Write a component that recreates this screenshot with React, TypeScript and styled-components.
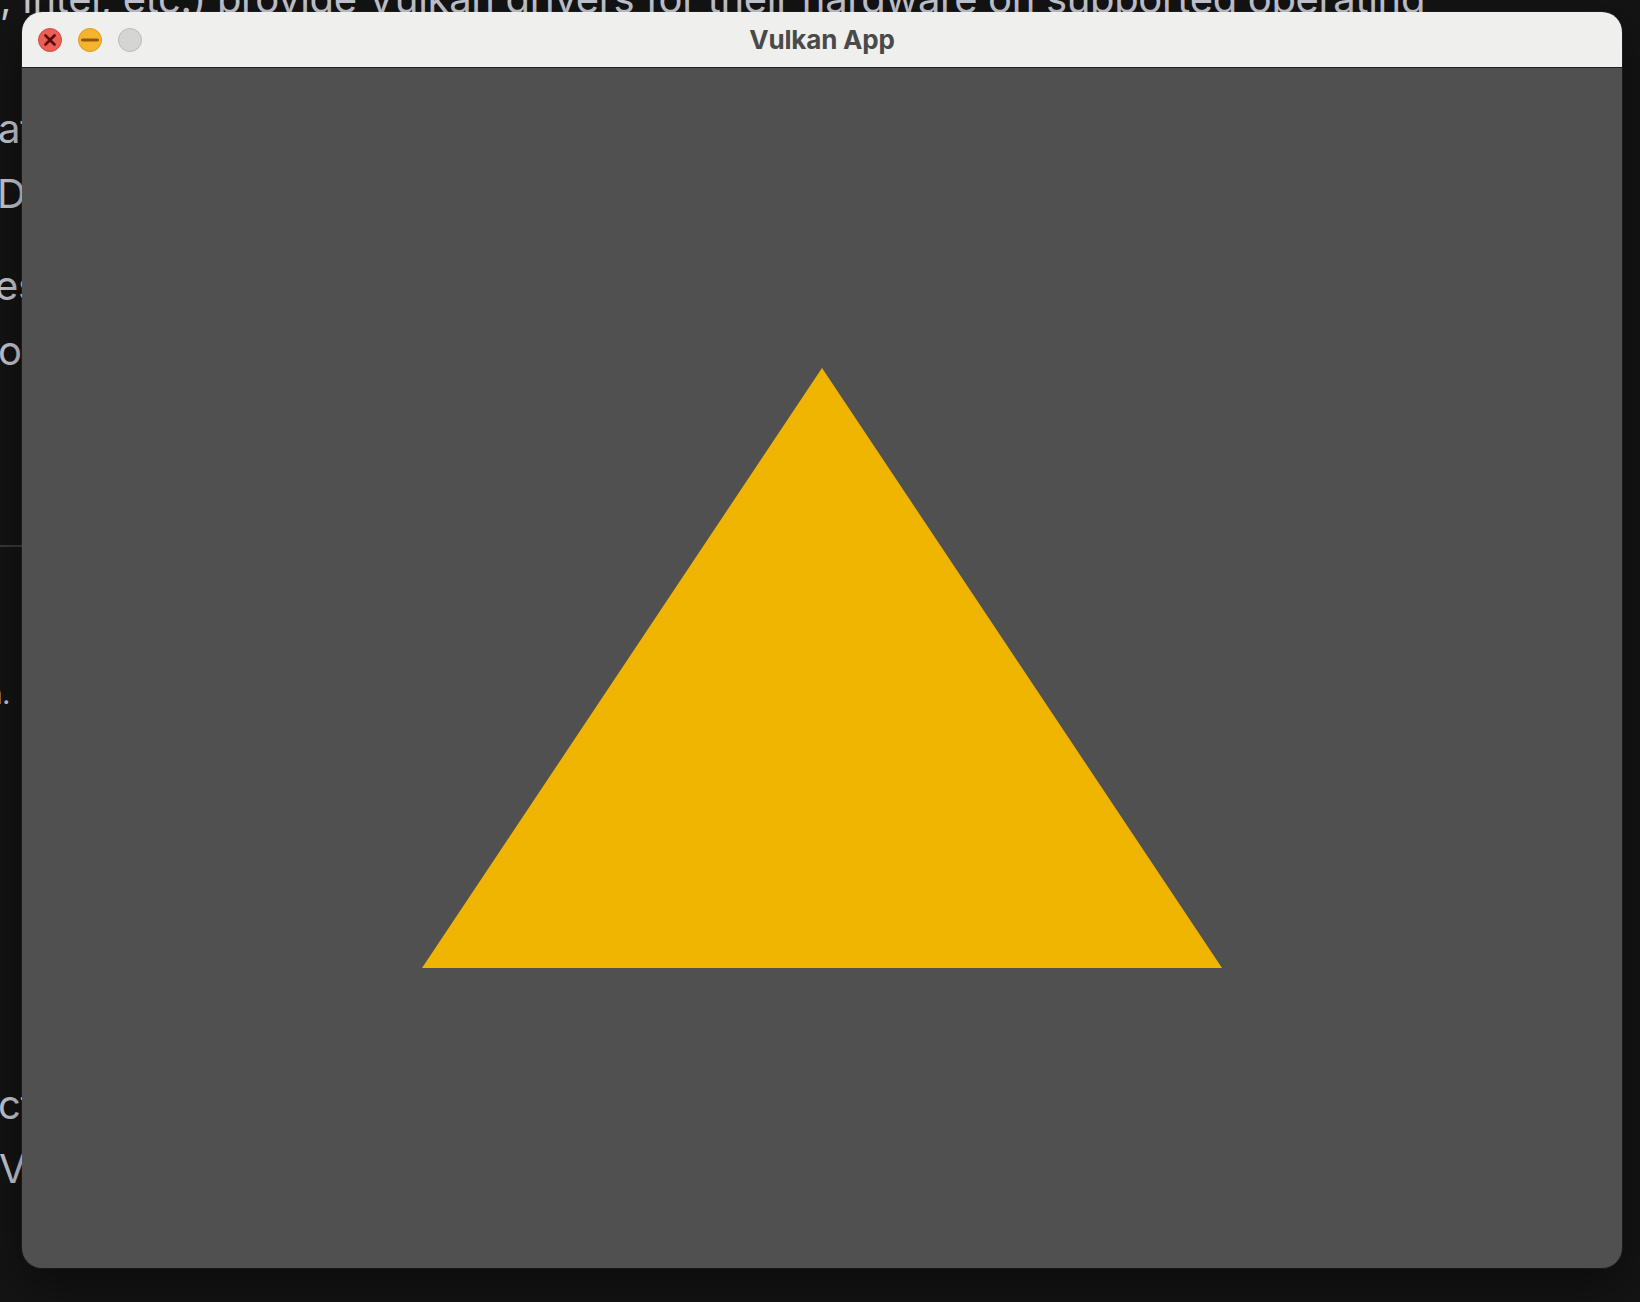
import React from "react";
import styled, { createGlobalStyle } from "styled-components";

const GlobalStyle = createGlobalStyle`
  html, body {
    margin: 0;
    padding: 0;
    background: #141414;
  }
  body {
    width: 1640px;
    height: 1302px;
    overflow: hidden;
  }
`;

const Desktop = styled.div`
  position: relative;
  width: 1640px;
  height: 1302px;
  overflow: hidden;
  background: #141414;
  font-family: Inter, "Noto Sans", sans-serif;
`;

const Doc = styled.article`
  display: flex;
  flex-direction: column;
  width: 1500px;
  margin-top: -34px;
  color: #c8cad5;
  letter-spacing: -0.33px;
`;

const Para = styled.div<{ $gap: number; $size?: number; $lh?: number }>`
  margin-top: ${(p) => p.$gap}px;
  font-size: ${(p) => p.$size ?? 40}px;
  line-height: ${(p) => p.$lh ?? 65}px;
`;

const Line = styled.div<{ $shift: number }>`
  margin-left: ${(p) => p.$shift}px;
  white-space: nowrap;
`;

const Rule = styled.div<{ $gap: number }>`
  margin-top: ${(p) => p.$gap}px;
  height: 2px;
  background: #393939;
`;

const Window = styled.section`
  position: absolute;
  left: 22px;
  top: 12px;
  width: 1600px;
  display: flex;
  flex-direction: column;
  border-radius: 20px;
  overflow: hidden;
  box-shadow: 0 0 0 1px rgba(255, 255, 255, 0.05), 0 16px 48px rgba(0, 0, 0, 0.45);
`;

const TitleBar = styled.header`
  height: 55px;
  display: flex;
  align-items: center;
  justify-content: center;
  position: relative;
  background: #efefed;
  border-bottom: 1px solid #1f1f1f;
`;

const Lights = styled.div`
  position: absolute;
  left: 16px;
  top: 16px;
  display: flex;
  align-items: center;
  gap: 16px;
`;

const Light = styled.span<{ $fill: string; $ring: string }>`
  box-sizing: border-box;
  width: 24px;
  height: 24px;
  border-radius: 50%;
  background: ${(p) => p.$fill};
  border: 1px solid ${(p) => p.$ring};
  display: flex;
  align-items: center;
  justify-content: center;
  svg {
    display: block;
  }
`;

const Title = styled.h1`
  margin: 0;
  font-family: Inter, "Noto Sans", sans-serif;
  font-size: 26px;
  font-weight: 700;
  line-height: 32px;
  color: #4a4a4a;
  letter-spacing: -0.2px;
`;

const Canvas = styled.div`
  height: 1200px;
  background: #505050;
  svg {
    display: block;
  }
`;

export default function App() {
  return (
    <>
      <GlobalStyle />
      <Desktop>
        <Doc>
          <Para $gap={0}>
            <Line $shift={0}>, Intel, etc.) provide Vulkan drivers for their hardware on supported operating</Line>
            <Line $shift={60}>systems, so the same code runs on every GPU.</Line>
            <Line $shift={-2}>at runtime the loader finds them for you.</Line>
            <Line $shift={-3}>Drivers expose the devices your app can use.</Line>
          </Para>
          <Para $gap={27}>
            <Line $shift={-5}>es the window surface and the swapchain.</Line>
            <Line $shift={-2}>o draw one triangle on the screen.</Line>
          </Para>
          <Rule $gap={162} />
          <Para $gap={125} $size={28} $lh={45}>
            <Line $shift={-14}>n.</Line>
          </Para>
          <Para $gap={356} $lh={64}>
            <Line $shift={-2}>ct with the GPU through command buffers.</Line>
            <Line $shift={-1}>Vulkan gives you explicit control.</Line>
          </Para>
        </Doc>

        <Window>
          <TitleBar>
            <Lights>
              <Light $fill="#ec5f57" $ring="#d24a42">
                <svg width="12" height="12" viewBox="0 0 12 12">
                  <path d="M1.5 1.5 L10.5 10.5 M10.5 1.5 L1.5 10.5" stroke="#5c0b08" strokeWidth="2.6" strokeLinecap="round" />
                </svg>
              </Light>
              <Light $fill="#f4b52c" $ring="#d99d1e">
                <svg width="18" height="6" viewBox="0 0 18 6">
                  <path d="M1.5 3 L16.5 3" stroke="#945712" strokeWidth="3" strokeLinecap="round" />
                </svg>
              </Light>
              <Light $fill="#d5d5d3" $ring="#b9b9b7" />
            </Lights>
            <Title>Vulkan App</Title>
          </TitleBar>
          <Canvas>
            <svg width="1600" height="1200" viewBox="0 0 1600 1200">
              <polygon points="800,300 1200,900 400,900" fill="#f0b500" />
            </svg>
          </Canvas>
        </Window>
      </Desktop>
    </>
  );
}
